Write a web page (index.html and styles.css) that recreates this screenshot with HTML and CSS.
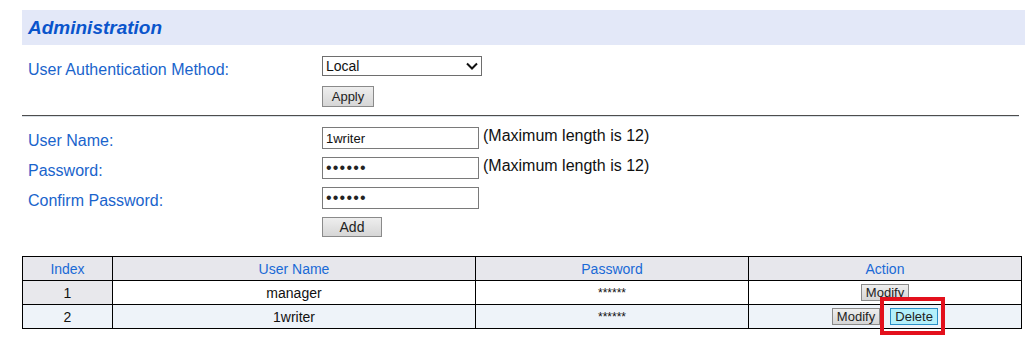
FILE: index.html
```html
<!DOCTYPE html>
<html lang="en">
<head>
  <meta charset="UTF-8">
  <title>Administration</title>
  <link rel="stylesheet" href="styles.css">
</head>
<body>
  <div id="page">
    <h1 class="title-bar">Administration</h1>

    <div class="form-row auth-row">
      <label class="label" for="auth-method">User Authentication Method:</label>
      <div class="field">
        <div class="select-wrap">
          <select id="auth-method">
            <option value="local">Local</option>
            <option value="radius">RADIUS</option>
          </select>
          <svg class="chevron" width="12" height="8" viewBox="0 0 12 8"><path d="M1 1.5 L6 6.5 L11 1.5" fill="none" stroke="#111" stroke-width="2"/></svg>
        </div>
      </div>
    </div>
    <div class="form-row button-row">
      <span></span>
      <div class="field"><button class="btn apply-btn">Apply</button></div>
    </div>

    <hr class="divider">

    <div class="form-row">
      <label class="label" for="user-name">User Name:</label>
      <div class="field">
        <input type="text" id="user-name" value="1writer">
        <span class="hint">(Maximum length is 12)</span>
      </div>
    </div>
    <div class="form-row">
      <label class="label" for="password">Password:</label>
      <div class="field">
        <input type="password" id="password" value="123456">
        <span class="hint">(Maximum length is 12)</span>
      </div>
    </div>
    <div class="form-row">
      <label class="label" for="confirm-password">Confirm Password:</label>
      <div class="field">
        <input type="password" id="confirm-password" value="123456">
      </div>
    </div>
    <div class="form-row add-row">
      <span></span>
      <div class="field"><button class="btn add-btn">Add</button></div>
    </div>

    <table id="user-table">
      <thead>
        <tr>
          <th class="col-index">Index</th>
          <th class="col-name">User Name</th>
          <th class="col-pass">Password</th>
          <th>Action</th>
        </tr>
      </thead>
      <tbody>
        <tr class="row-plain">
          <td class="index-cell">1</td>
          <td>manager</td>
          <td class="stars">******</td>
          <td><div class="actions"><button class="btn small-btn">Modify</button></div></td>
        </tr>
        <tr class="row-alt">
          <td>2</td>
          <td>1writer</td>
          <td class="stars">******</td>
          <td>
            <div class="actions">
              <button class="btn small-btn">Modify</button>
              <span class="highlight-wrap">
                <button class="btn small-btn delete-btn">Delete</button>
                <span class="highlight"></span>
              </span>
            </div>
          </td>
        </tr>
      </tbody>
    </table>
  </div>
</body>
</html>
```

FILE: styles.css
```css
body {
  margin: 0;
  min-height: 348px;
  font-family: "Liberation Sans", Arial, sans-serif;
  background: #ffffff;
  color: #111;
}

#page {
  padding-left: 22px;
  padding-bottom: 20px;
  width: 1003px;
}

.title-bar {
  margin: 10px 0 0 0;
  height: 35px;
  line-height: 35px;
  padding-left: 6px;
  font-size: 19px;
  font-weight: bold;
  font-style: italic;
  color: #0a55cc;
  background-color: #e3e8f8;
}

.form-row {
  display: grid;
  grid-template-columns: 294px 1fr;
  padding-left: 6px;
  height: 30px;
  align-items: start;
}

.auth-row {
  margin-top: 11px;
}

.button-row {
  height: 22px;
}

.label {
  font-size: 16px;
  color: #1a64cc;
  padding-top: 5px;
}

.field {
  display: flex;
  align-items: center;
  gap: 4px;
}

.select-wrap {
  position: relative;
  width: 160px;
  height: 20px;
}

select {
  appearance: none;
  width: 160px;
  height: 20px;
  margin: 0;
  padding: 0 0 0 3px;
  border: 1px solid #6e6e6e;
  border-radius: 0;
  background: #fff;
  font-family: "Liberation Sans", Arial, sans-serif;
  font-size: 14px;
  color: #111;
}

.chevron {
  position: absolute;
  right: 4px;
  top: 6px;
  pointer-events: none;
}

.btn {
  margin: 0;
  font-family: "Liberation Sans", Arial, sans-serif;
  color: #222;
  background: linear-gradient(#eeeeee, #d6d6d6);
  border: 1px solid #8a8a8a;
  border-radius: 0;
  cursor: pointer;
}

.apply-btn {
  width: 52px;
  height: 21px;
  font-size: 13px;
  padding: 0;
}

.divider {
  margin: 7px 0 10px 0;
  width: 997px;
  border: 0;
  border-top: 1px solid #4d4d4d;
  border-bottom: 1px solid #d9e0e6;
  height: 0;
}

input {
  width: 157px;
  height: 22px;
  box-sizing: border-box;
  margin: 0;
  padding: 0 3px;
  border: 1px solid #7a7a7a;
  font-family: "Liberation Sans", Arial, sans-serif;
  font-size: 13px;
  color: #111;
}

input[type="password"] {
  font-size: 16px;
  letter-spacing: 1.2px;
  color: #222;
}

.hint {
  font-size: 16px;
  color: #111;
  margin-top: -4px;
}

.add-row {
  height: 39px;
}

.add-btn {
  width: 60px;
  height: 20px;
  font-size: 14px;
  padding: 0;
}

#user-table {
  width: 1000px;
  border-collapse: collapse;
  font-size: 14px;
}

#user-table th,
#user-table td {
  border: 1px solid #000;
  height: 23px;
  padding: 0;
  text-align: center;
  font-weight: normal;
}

#user-table th {
  color: #1a6ad6;
  background-color: #e7e7ec;
}

.col-index {
  width: 89px;
}

.col-name {
  width: 362px;
}

.col-pass {
  width: 272px;
}

.row-plain td {
  background-color: #ffffff;
}

.row-plain .index-cell {
  background-color: #e8e8ec;
}

.row-alt td {
  background-color: #eef3f9;
}

.stars {
  font-size: 12px;
}

.actions {
  display: flex;
  justify-content: center;
  align-items: center;
  gap: 10px;
}

.small-btn {
  height: 17px;
  padding: 0 4px;
  font-size: 13px;
  line-height: 15px;
}

.delete-btn {
  width: 48px;
  background: #b4f0fa;
  border: 1px solid #2a8fc8;
}

.highlight-wrap {
  position: relative;
  display: inline-flex;
}

.highlight {
  position: absolute;
  top: -11px;
  left: -10px;
  right: -7px;
  bottom: -10px;
  border: 4px solid #e3101c;
  pointer-events: none;
}
```
